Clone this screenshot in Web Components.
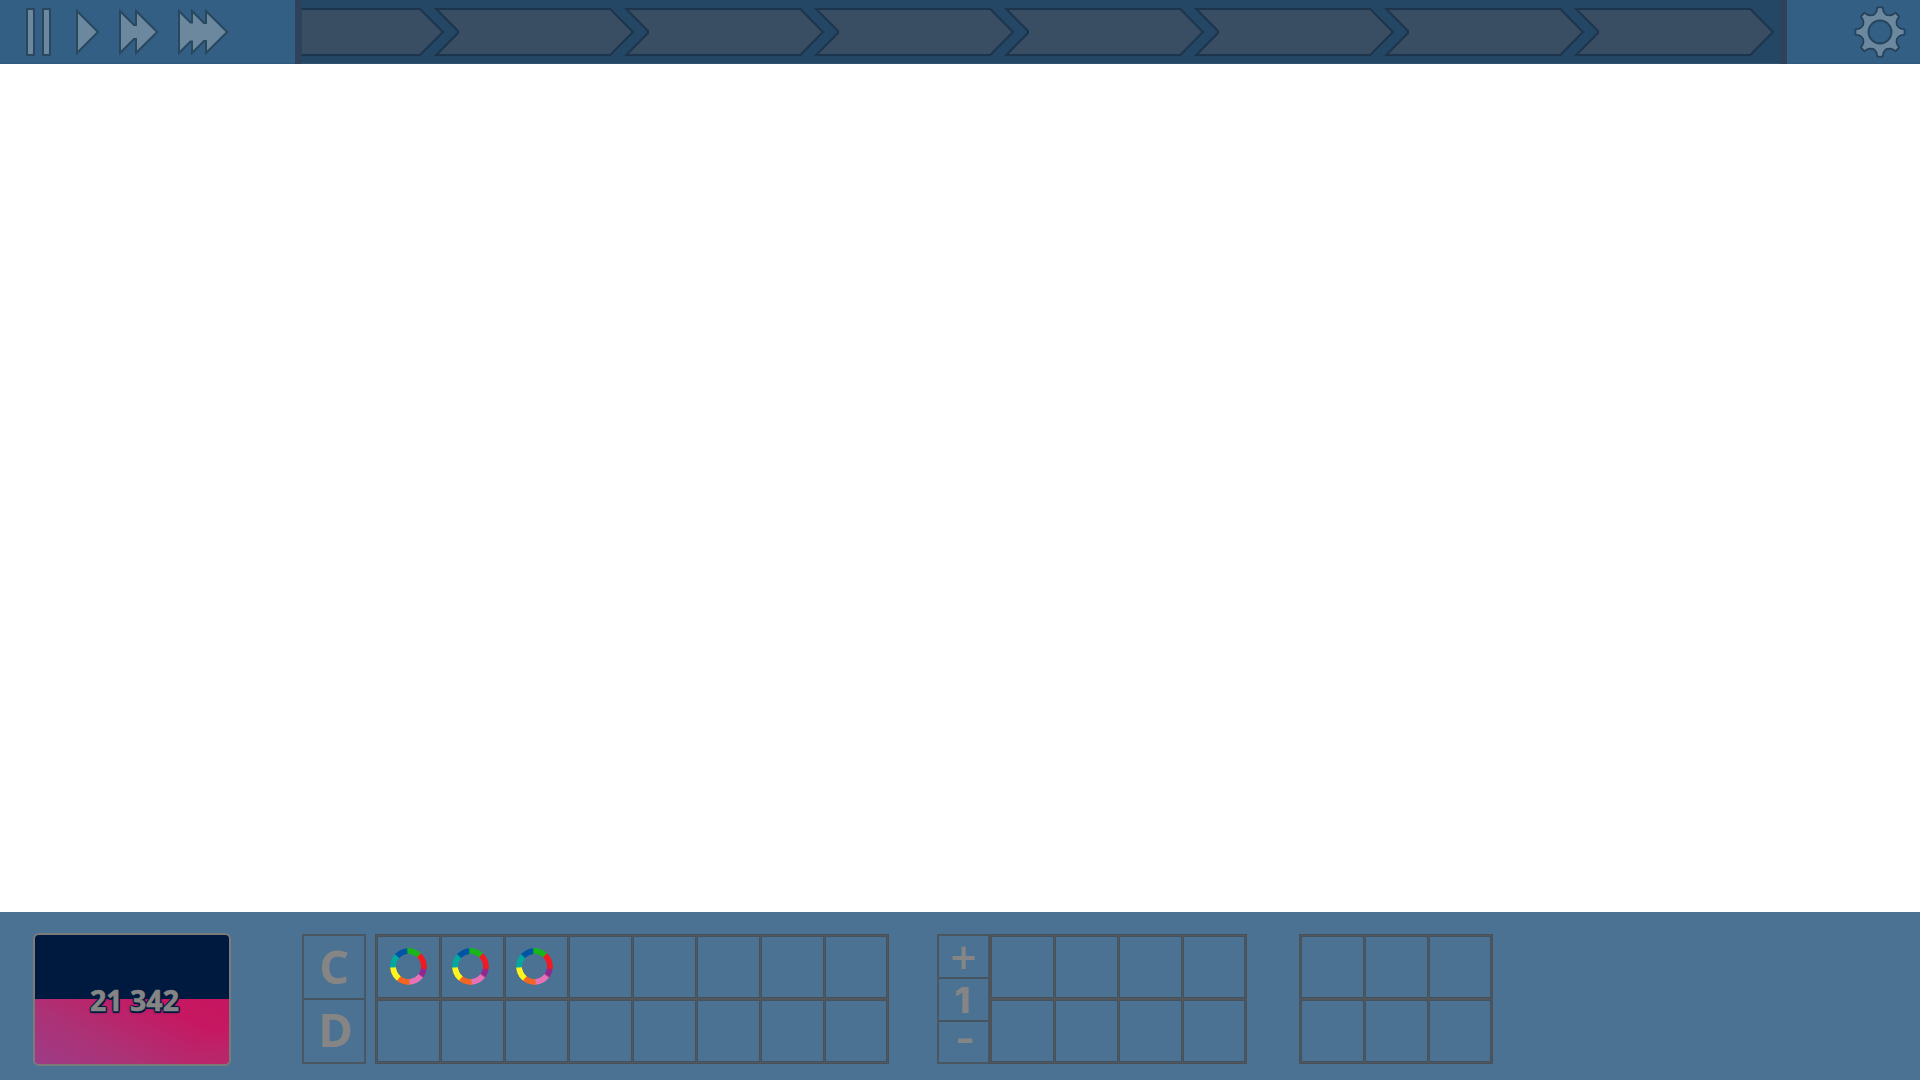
<!DOCTYPE html>
<html lang="en"><head><meta charset="utf-8"><title>Game HUD</title>
<style>html,body{margin:0;height:100%;background:#fff;overflow:hidden}</style></head><body>
<game-hud></game-hud>
<script>
class Base extends HTMLElement{
  constructor(){super();this.attachShadow({mode:'open'});}
  draw(h){this.shadowRoot.innerHTML=h;}
}
customElements.define('speed-controls',class extends Base{connectedCallback(){this.draw(`
<style>:host{display:block;width:295px;height:64px}svg{display:block}</style>
<svg width="295" height="64" fill="#6b889f" stroke="#29475f" stroke-width="2">
<path d="M27 9H34V55H27ZM43 9H50V55H43Z"/>
<path d="M77 11L98 32L77 53Z"/>
<path d="M120 11L134 25H136V11L157.2 32L136 53V39H134L120 53Z"/>
<path d="M179 11L190.5 22.5H192V11L204 23H206V11L227.2 32L206 53V41H204L192 53V41.5H190.5L179 53Z"/>
</svg>`);}});
customElements.define('wave-step',class extends Base{connectedCallback(){
const first=this.hasAttribute('first');
this.draw(`
<style>:host{display:block;flex:none;width:${first?132:190}px;height:64px}svg{display:block;overflow:visible}</style>
<svg width="${first?132:190}" height="64" fill="#394e62" stroke="#1d354c" stroke-width="2">
${first?'<path stroke="none" d="M0 9H118L141 32L118 55H0Z"/><path fill="none" d="M0 9H118L141 32L118 55H0"/>':'<path d="M2.2 9H176.3L199 32L176.3 55H2.2L24 33V31Z"/>'}
</svg>`);}});
customElements.define('wave-track',class extends Base{connectedCallback(){this.draw(`
<style>:host{display:flex;box-sizing:border-box;width:1492px;height:64px;border:solid #2e4359;border-width:0 7px;background:linear-gradient(#244766 63px,#2c5476 63px)}</style>
<wave-step first></wave-step>${'<wave-step></wave-step>'.repeat(7)}`);}});
customElements.define('settings-gear',class extends Base{connectedCallback(){
let d='';const p=(r,a)=>{a=a*Math.PI/180;return (32+r*Math.sin(a)).toFixed(2)+' '+(32-r*Math.cos(a)).toFixed(2);};
for(let i=0;i<8;i++){const a=i*45;d+=(i?'L':'M')+p(19.4,a-13.5)+'L'+p(21,a-9.5)+'L'+p(24.7,a-6.2)+'L'+p(24.7,a+6.2)+'L'+p(21,a+9.5)+'L'+p(19.4,a+13.5)+'L'+p(18.2,a+22.5);}
this.draw(`<style>:host{display:block;width:64px;height:64px}svg{display:block}</style>
<svg width="64" height="64" fill="#6b889f" stroke="#24435d" stroke-width="1.8" stroke-linejoin="round"><path d="${d}Z"/><circle cx="32" cy="32" r="11.5" fill="#335f84"/></svg>`);}});
customElements.define('score-card',class extends Base{connectedCallback(){this.draw(`
<style>:host{display:flex;align-items:center;justify-content:center;box-sizing:border-box;width:198px;height:133px;border:2px solid #7b7b7b;border-radius:6px;
background:linear-gradient(#001a3f,#001a3f) 0 0/100% 64px no-repeat,linear-gradient(150deg,transparent 76%,#b9286a 100%) 0 64px/100% 65px no-repeat,linear-gradient(28deg,#9d3b87 0%,#ad3175 35%,#c61862 75%,#c61560 100%) 0 64px/100% 65px no-repeat;
font:bold 28.5px "Open Sans","Noto Sans",sans-serif;color:#858585}
span{position:relative;top:1px;left:2.5px;white-space:pre;line-height:1;-webkit-text-stroke:.6px #858585;text-shadow:-1.5px 0 #001a3f,1.5px 0 #001a3f,0 -1.5px #001a3f,0 1.5px #001a3f,-1px -1px #001a3f,1px -1px #001a3f,-1px 1.5px #001a3f,1px 1.5px #001a3f,0 1px 3px #001a3f}</style>
<span><slot></slot></span>`);}});
customElements.define('color-ring',class extends Base{connectedCallback(){this.draw(`
<style>:host{display:block;width:37px;height:37px;border-radius:50%;background:conic-gradient(#18b51b 0 40deg,#ef1b22 46deg 97deg,#92278f 101deg 124deg,#e872b7 130deg 174deg,#f26522 178deg 217deg,#fff31c 221deg 264deg,#00a99d 269deg 310deg,#0054a6 314deg 353deg,#18b51b 358deg);
-webkit-mask:radial-gradient(circle,transparent 12.1px,#000 12.8px)}</style>`);}});
customElements.define('slot-cell',class extends Base{connectedCallback(){this.draw(`
<style>:host{display:flex;align-items:center;justify-content:center;background:#4b7293;box-shadow:0 0 0 1px #43525f}</style><slot></slot>`);}});
customElements.define('slot-grid',class extends Base{connectedCallback(){const c=this.getAttribute('cols');this.draw(`
<style>:host{display:grid;box-sizing:border-box;height:130px;grid-template-columns:repeat(${c-1},61px) 60px;grid-template-rows:60px 60px;gap:4px 3px;padding:2px;border:1px solid #46515b;background:#53565a}</style><slot></slot>`);}});
customElements.define('key-stack',class extends Base{connectedCallback(){this.draw(`
<style>:host{display:grid;grid-template-rows:var(--rows);box-sizing:border-box;height:130px;border:2px solid #4a5660;font:bold 47px "Open Sans","Noto Sans",sans-serif;color:#858585}
::slotted(*){min-height:0;box-sizing:border-box;display:flex;align-items:center;justify-content:center;line-height:1}
::slotted(*:not(:first-child)){border-top:2px solid #465460}</style><slot></slot>`);}});
customElements.define('game-hud',class extends Base{connectedCallback(){
const cells=(n,r=0)=>Array.from({length:n},(_,i)=>`<slot-cell>${i<r?'<color-ring></color-ring>':''}</slot-cell>`).join('');
this.draw(`
<style>:host{display:flex;flex-direction:column;justify-content:space-between;width:1920px;height:1080px;background:#fff}
header{display:flex;height:64px;background:linear-gradient(#335f84 63px,#305a7e 63px)}
settings-gear{margin-left:61px}
footer{display:flex;box-sizing:border-box;height:168px;padding:22px 0 0 33px;background:#4b7293}
score-card{margin:-1px 71px 0 0}
.cd{--rows:62px 64px;width:64px;margin-right:9px}.step{--rows:41px 43px 42px;width:52px;margin-left:48px;border-right-width:1px}
.c{padding-bottom:1px}.d{padding:0 0 4px 3px}
.plus{font:bold 35px/1 "DejaVu Sans",sans-serif;padding-top:2px}
.one{font:800 36px/1 Inter,sans-serif;padding-right:2px}
.minus{font:bold 36px/1 "DejaVu Sans",sans-serif;padding:0 0 6px 3px}
color-ring{margin:0 4px 1px 0}slot-cell:first-child color-ring{margin-right:1px}
.g3{margin-left:52px}</style>
<header><speed-controls></speed-controls><wave-track></wave-track><settings-gear></settings-gear></header>
<footer><score-card>21 342</score-card>
<key-stack class="cd"><span class="c">C</span><span class="d">D</span></key-stack>
<slot-grid cols="8">${cells(16,3)}</slot-grid>
<key-stack class="step"><span class="plus">+</span><span class="one">1</span><span class="minus">–</span></key-stack>
<slot-grid class="g2" cols="4">${cells(8)}</slot-grid>
<slot-grid class="g3" cols="3">${cells(6)}</slot-grid></footer>`);}});
</script></body></html>
